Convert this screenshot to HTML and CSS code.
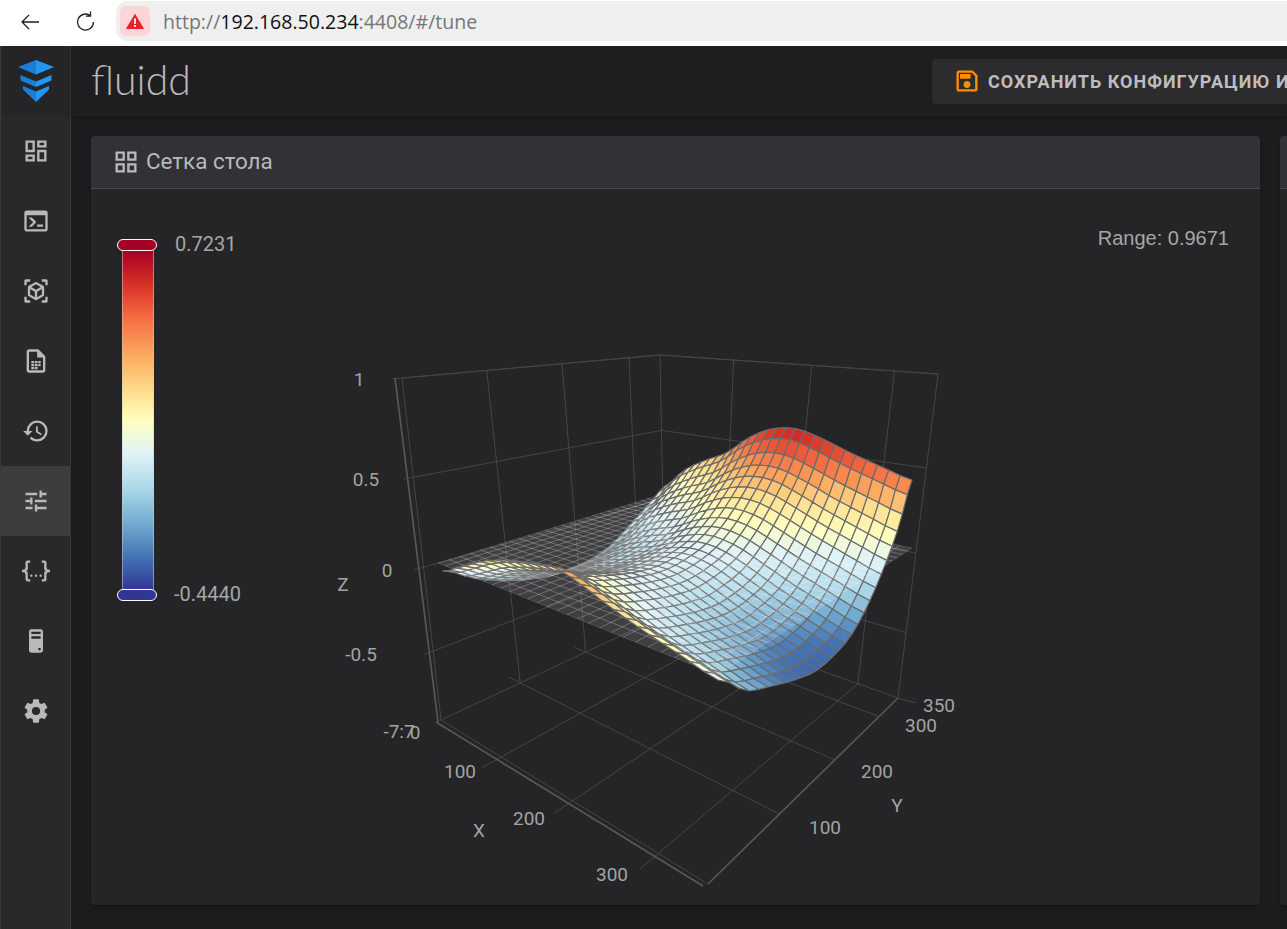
FILE: index.html
```html
<!DOCTYPE html>
<html lang="ru">
<head>
<meta charset="utf-8">
<title>fluidd</title>
<link rel="stylesheet" href="styles.css">
</head>
<body>
<div class="browser-bar">
  <svg class="nav-icon" viewBox="0 0 24 24"><path d="M21 12H4M11 5l-7 7 7 7"/></svg>
  <svg class="nav-icon reload" viewBox="0 0 24 24"><path d="M19.5 12a8 8 0 1 1-3-6.2M16.5 1.5v4.6h-4.6"/></svg>
  <div class="address">
    <span class="warn"><svg viewBox="0 0 24 24"><path d="M12 3.2 23 21.5H1z"/><rect class="warn-mark" x="10.9" y="9" width="2.2" height="6.5"/><rect class="warn-mark" x="10.9" y="16.8" width="2.2" height="2.2"/></svg></span>
    <span class="url">http://<b>192.168.50.234</b>:4408/#/tune</span>
  </div>
</div>
<div class="app">
  <aside class="sidebar">
    <div class="logo">
      <svg viewBox="0 0 36 42"><path class="lg-d" d="M18 0 0 7l18 7.6z"/><path class="lg-l" d="M18 0l18 7-18 7.6z"/><path class="lg-d" d="M2.5 15 18 21.6V27L2.5 20.4z"/><path class="lg-l" d="M33.5 15 18 21.6V27l15.5-6.6z"/><path class="lg-d" d="M5 26l13 5.5V42L5 29.5z"/><path class="lg-l" d="M31 26l-13 5.5V42l13-12.5z"/></svg>
    </div>
    <a class="nav-item"><svg viewBox="0 0 24 24"><path d="M19,5V7H15V5H19M9,5V11H5V5H9M19,13V19H15V13H19M9,17V19H5V17H9M21,3H13V9H21V3M11,3H3V13H11V3M21,11H13V21H21V11M11,15H3V21H11V15Z"/></svg></a>
    <a class="nav-item"><svg viewBox="0 0 24 24"><path d="M20,19V7H4V19H20M20,3A2,2 0 0,1 22,5V19A2,2 0 0,1 20,21H4A2,2 0 0,1 2,19V5A2,2 0 0,1 4,3H20M13,17V15H18V17H13M9.58,13L5.57,9H8.4L11.7,12.3C12.09,12.69 12.09,13.33 11.7,13.72L8.42,17H5.59L9.58,13Z"/></svg></a>
    <a class="nav-item"><svg viewBox="0 0 24 24"><path d="M17,22V20H20V17H22V20.5C22,20.89 21.84,21.24 21.54,21.54C21.24,21.84 20.89,22 20.5,22H17M7,22H3.5C3.11,22 2.76,21.84 2.46,21.54C2.16,21.24 2,20.89 2,20.5V17H4V20H7V22M17,2H20.5C20.89,2 21.24,2.16 21.54,2.46C21.84,2.76 22,3.11 22,3.5V7H20V4H17V2M7,2V4H4V7H2V3.5C2,3.11 2.16,2.76 2.46,2.46C2.76,2.16 3.11,2 3.5,2H7M13,17.25L17,14.95V10.36L13,12.65V17.25M12,10.92L16,8.63L12,6.28L8,8.63L12,10.92M7,14.95L11,17.25V12.65L7,10.36V14.95M18.23,7.59C18.73,7.91 19,8.34 19,8.91V15.23C19,15.8 18.73,16.23 18.23,16.55L12.75,19.73C12.25,20.05 11.75,20.05 11.25,19.73L5.77,16.55C5.27,16.23 5,15.8 5,15.23V8.91C5,8.34 5.27,7.91 5.77,7.59L11.25,4.41C11.5,4.28 11.75,4.22 12,4.22C12.25,4.22 12.5,4.28 12.75,4.41L18.23,7.59Z"/></svg></a>
    <a class="nav-item"><svg viewBox="0 0 24 24"><path d="M14 2H6C4.89 2 4 2.9 4 4V20C4 21.11 4.89 22 6 22H18C19.11 22 20 21.11 20 20V8L14 2M18 20H6V4H13V9H18V20Z"/><path d="M8 12h2.4v2H8zM11 12h2.4v2H11zM14 12h2v2h-2zM8 14.6h2.4v2H8zM11 14.6h2.4v2H11zM14 14.6h2v2h-2zM8 17.2h2.4v1.8H8zM11 17.2h2.4v1.8H11z"/></svg></a>
    <a class="nav-item"><svg viewBox="0 0 24 24"><path d="M13.5,8H12V13L16.28,15.54L17,14.33L13.5,12.25V8M13,3A9,9 0 0,0 4,12H1L4.96,16.03L9,12H6A7,7 0 0,1 13,5A7,7 0 0,1 20,12A7,7 0 0,1 13,19C11.07,19 9.32,18.21 8.06,16.94L6.64,18.36C8.27,20 10.5,21 13,21A9,9 0 0,0 22,12A9,9 0 0,0 13,3"/></svg></a>
    <a class="nav-item active"><svg viewBox="0 0 24 24"><path d="M3,17V19H9V17H3M3,5V7H13V5H3M13,21V19H21V17H13V15H11V21H13M7,9V11H3V13H7V15H9V9H7M21,13V11H11V13H21M15,9H17V7H21V5H17V3H15V9Z"/></svg></a>
    <a class="nav-item"><svg viewBox="0 0 24 24"><path d="M5,3H7V5H5V10A2,2 0 0,1 3,12A2,2 0 0,1 5,14V19H7V21H5C3.93,20.73 3,20.1 3,19V15A2,2 0 0,0 1,13H0V11H1A2,2 0 0,0 3,9V5A2,2 0 0,1 5,3M19,3A2,2 0 0,1 21,5V9A2,2 0 0,0 23,11H24V13H23A2,2 0 0,0 21,15V19A2,2 0 0,1 19,21H17V19H19V14A2,2 0 0,1 21,12A2,2 0 0,1 19,10V5H17V3H19M12,15A1,1 0 0,1 13,16A1,1 0 0,1 12,17A1,1 0 0,1 11,16A1,1 0 0,1 12,15M8,15A1,1 0 0,1 9,16A1,1 0 0,1 8,17A1,1 0 0,1 7,16A1,1 0 0,1 8,15M16,15A1,1 0 0,1 17,16A1,1 0 0,1 16,17A1,1 0 0,1 15,16A1,1 0 0,1 16,15Z"/></svg></a>
    <a class="nav-item"><svg viewBox="0 0 24 24"><path d="M8,2H16A2,2 0 0,1 18,4V20A2,2 0 0,1 16,22H8A2,2 0 0,1 6,20V4A2,2 0 0,1 8,2M8,4V6H16V4H8M16,8H8V10H16V8M16,18H14V20H16V18Z" fill-rule="evenodd"/></svg></a>
    <a class="nav-item"><svg viewBox="0 0 24 24"><path d="M12,15.5A3.5,3.5 0 0,1 8.5,12A3.5,3.5 0 0,1 12,8.5A3.5,3.5 0 0,1 15.5,12A3.5,3.5 0 0,1 12,15.5M19.43,12.97C19.47,12.65 19.5,12.33 19.5,12C19.5,11.67 19.47,11.34 19.43,11L21.54,9.37C21.73,9.22 21.78,8.95 21.66,8.73L19.66,5.27C19.54,5.05 19.27,4.96 19.05,5.05L16.56,6.05C16.04,5.66 15.5,5.32 14.87,5.07L14.5,2.42C14.46,2.18 14.25,2 14,2H10C9.75,2 9.54,2.18 9.5,2.42L9.13,5.07C8.5,5.32 7.96,5.66 7.44,6.05L4.95,5.05C4.73,4.96 4.46,5.05 4.34,5.27L2.34,8.73C2.21,8.95 2.27,9.22 2.46,9.37L4.57,11C4.53,11.34 4.5,11.67 4.5,12C4.5,12.33 4.53,12.65 4.57,12.97L2.46,14.63C2.27,14.78 2.21,15.05 2.34,15.27L4.34,18.73C4.46,18.95 4.73,19.03 4.95,18.95L7.44,17.94C7.96,18.34 8.5,18.68 9.13,18.93L9.5,21.58C9.54,21.82 9.75,22 10,22H14C14.25,22 14.46,21.82 14.5,21.58L14.87,18.93C15.5,18.67 16.04,18.34 16.56,17.94L19.05,18.95C19.27,19.03 19.54,18.95 19.66,18.73L21.66,15.27C21.78,15.05 21.73,14.78 21.54,14.63L19.43,12.97Z"/></svg></a>
  </aside>
  <div class="main">
    <header class="topbar">
      <span class="wordmark">fluidd</span>
      <button class="save-btn">
        <svg viewBox="0 0 24 24"><path d="M17 3H5C3.89 3 3 3.9 3 5V19C3 20.1 3.89 21 5 21H19C20.1 21 21 20.1 21 19V7L17 3M19 19H5V5H16.17L19 7.83V19M12 12C10.34 12 9 13.34 9 15S10.34 18 12 18 15 16.66 15 15 13.66 12 12 12M6 6H15V10H6V6Z"/></svg>
        <span>СОХРАНИТЬ КОНФИГУРАЦИЮ И ПЕРЕЗАПУСТИТЬ</span>
      </button>
    </header>
    <div class="content">
      <section class="card mesh-card">
        <div class="card-head">
          <svg viewBox="0 0 24 24"><path d="M3,11H11V3H3M5,5H9V9H5M13,21H21V13H13M15,15H19V19H15M3,21H11V13H3M5,15H9V19H5M13,3V11H21V3M19,9H15V5H19Z"/></svg>
          <span class="card-title">Сетка стола</span>
        </div>
        <div class="card-body">
          <div class="scale">
            <div class="scale-bar">
              <i class="handle handle-top"></i>
              <i class="handle handle-bottom"></i>
            </div>
            <div class="scale-labels"><span class="val-top">0.7231</span><span class="val-bottom">-0.4440</span></div>
          </div>
          <div class="range">Range: 0.9671</div>
          <svg id="plot" class="plot" viewBox="91 189 1169 716">
            <g id="axes"></g>
            <g id="surface"></g>
            <g class="ticks">
              <text x="359" y="386">1</text>
              <text x="366" y="486">0.5</text>
              <text x="387" y="577">0</text>
              <text x="361" y="661">-0.5</text>
              <text x="399" y="738">-7:7</text>
              <text x="415" y="739">0</text>
              <text x="343" y="591">Z</text>
              <text x="460" y="778">100</text>
              <text x="529" y="825">200</text>
              <text x="612" y="881">300</text>
              <text x="479" y="837">X</text>
              <text x="897" y="812">Y</text>
              <text x="825" y="834">100</text>
              <text x="877" y="778">200</text>
              <text x="921" y="732">300</text>
              <text x="939" y="712">350</text>
            </g>
          </svg>
        </div>
      </section>
      <section class="card side-card">
        <div class="card-head"></div>
        <div class="card-body"><div class="side-row"></div></div>
      </section>
    </div>
  </div>
</div>
<script src="plot.js"></script>
</body>
</html>
```
FILE: styles.css
```css
* { box-sizing: border-box; }
html, body { margin: 0; height: 100%; overflow: hidden; background: #1c1c1e; }
body { font-family: Roboto, "Liberation Sans", sans-serif; }

.browser-bar { height: 46px; background: #fff; display: flex; align-items: flex-start; padding: 1px 0 0 1px; }
.nav-icon { width: 24px; height: 24px; margin: 9px 0 0 17px; fill: none; stroke: #222; stroke-width: 1.3; }
.nav-icon.reload { margin-left: 32px; }
.address { margin: 0 0 0 18px; flex: 1; height: 40px; background: #efefef; border-radius: 12px 0 0 12px; display: flex; align-items: center; padding-left: 4px; }
.warn { width: 30px; height: 30px; border-radius: 6px; background: #fbd5d7; display: flex; align-items: center; justify-content: center; }
.warn svg { width: 20px; height: 20px; fill: #e8202c; }
.warn .warn-mark { fill: #fff; }
.url { margin-left: 13px; font: 19.55px "Open Sans", sans-serif; color: #767676; }
.url b { font-weight: 400; color: #111; }

.app { display: flex; height: 883px; }
.sidebar { width: 71px; flex: none; background: #29292b; border-right: 1px solid #38383a; border-left: 1px solid #3a3a3c; display: flex; flex-direction: column; }
.logo { height: 70px; background: #252527; display: flex; align-items: center; justify-content: center; }
.logo svg { width: 36px; height: 42px; margin-left: 1px; }
.lg-d { fill: #1a7fd4; }
.lg-l { fill: #2196f3; }
.nav-item { height: 70px; display: flex; align-items: center; justify-content: center; }
.nav-item svg { width: 28px; height: 28px; fill: #b9b9b9; }
.nav-item.active { background: #3d3d3f; }

.main { flex: 1; min-width: 0; display: flex; flex-direction: column; }
.topbar { height: 70px; flex: none; background: #1e1e20; display: flex; align-items: center; padding-left: 20px; box-shadow: 0 2px 4px rgba(0,0,0,.2); overflow: hidden; }
.wordmark { font: 300 41px Lato, sans-serif; color: #b8b8b8; width: 841px; flex: none; line-height: 1; margin-top: -3px; }
.save-btn { flex: none; width: 460px; height: 45px; background: #2c2c2e; border: 0; border-radius: 4px; display: flex; align-items: center; padding: 0 0 0 21px; gap: 7px; font: 700 18px Roboto, sans-serif; letter-spacing: 1px; color: #bdbdbd; white-space: nowrap; }
.save-btn svg { width: 28px; height: 28px; fill: #ff8f00; flex: none; }

.content { flex: 1; display: flex; gap: 20px; padding: 20px 0 24px 20px; min-height: 0; overflow: hidden; }
.card { background: #252527; border-radius: 4px; box-shadow: 0 2px 3px rgba(0,0,0,.25); display: flex; flex-direction: column; flex: none; overflow: hidden; }
.mesh-card { width: 1169px; }
.side-card { width: 600px; }
.card-head { height: 53px; flex: none; background: #313136; border-bottom: 1px solid #4c4c4e; display: flex; align-items: center; padding-left: 21px; color: #b9b9b9; font-size: 22.4px; gap: 6px; }
.card-head svg { width: 28px; height: 28px; fill: #b9b9b9; }
.card-title { margin-top: -2px; }
.card-body { flex: 1; position: relative; padding: 45px 31px 0 26px; display: flex; justify-content: space-between; align-items: flex-start; }
.scale { display: flex; gap: 22px; }
.scale-bar { width: 32px; height: 340px; margin-top: 16px; position: relative; border-left: 1px solid #ccc8; border-right: 1px solid #ccc8; background: linear-gradient(to bottom, #a50026 0%, #d73027 10%, #f46d43 20%, #fdae61 32%, #fee090 42%, #ffffbf 50%, #e0f3f8 60%, #abd9e9 70%, #74add1 80%, #4575b4 90%, #313695 100%); margin-left: 5px; }
.handle { position: absolute; left: -6px; width: 40px; height: 12px; border: 1px solid #fff; border-radius: 6px; }
.handle-top { top: -11px; background: #a50026; }
.handle-bottom { bottom: -11px; background: #313695; }
.scale-labels { display: flex; flex-direction: column; justify-content: space-between; height: 370px; font-size: 20px; color: #a6a6a6; line-height: 20px; margin-left: -1px; }
.val-bottom { margin-left: -1px; }
.range { font: 20px "Liberation Sans", sans-serif; color: #a6a6a6; line-height: 20px; margin-top: -6px; }
.plot { position: absolute; left: 0; top: 0; width: 1169px; height: 716px; }
.ticks text { font: 19px Roboto, sans-serif; fill: #a3a3a3; text-anchor: middle; }
.side-row { height: 59px; width: 100%; border-bottom: 1px solid #3a3a3c; }
.grid-line { stroke: #454546; stroke-width: 1; fill: none; }
.axis-line { stroke: #585859; stroke-width: 1.6; fill: none; }
.plane-cell { fill: rgba(255,255,255,.12); stroke: rgba(255,255,255,.17); stroke-width: .8; }
.mesh-cell { stroke: #6c6c6c; stroke-width: 1.2; stroke-linejoin: round; }
```
FILE: plot.js
```js
(function () {
  var NS = 'http://www.w3.org/2000/svg';
  var axes = document.getElementById('axes');
  var surf = document.getElementById('surface');

  // Unit square to quad, corners in order (0,0) (1,0) (1,1) (0,1)
  function quad(a, b, c, d) {
    var dx1 = b[0] - c[0], dx2 = d[0] - c[0], sx = a[0] - b[0] + c[0] - d[0];
    var dy1 = b[1] - c[1], dy2 = d[1] - c[1], sy = a[1] - b[1] + c[1] - d[1];
    var den = dx1 * dy2 - dx2 * dy1;
    var g = (sx * dy2 - dx2 * sy) / den, h = (dx1 * sy - sx * dy1) / den;
    return function (u, v) {
      var w = g * u + h * v + 1;
      return [((b[0] - a[0] + g * b[0]) * u + (d[0] - a[0] + h * d[0]) * v + a[0]) / w,
              ((b[1] - a[1] + g * b[1]) * u + (d[1] - a[1] + h * d[1]) * v + a[1]) / w];
    };
  }

  var floor = quad([441, 720], [708, 884], [898, 698], [665, 615]);
  var top = quad([402, 378], [715, 405], [938, 374], [660, 355]);
  var plane = quad([438, 563], [718, 675], [912, 548], [660, 495]);

  // position between the top (t=0) and the floor (t=1) of the box
  function box(u, v, t) {
    var a = top(u, v), b = floor(u, v);
    return [a[0] + (b[0] - a[0]) * t, a[1] + (b[1] - a[1]) * t];
  }
  var Z = { '1': 0, '.5': 0.29, '0': 0.553, '-.5': 0.798 };

  function add(parent, tag, attrs) {
    var el = document.createElementNS(NS, tag);
    for (var k in attrs) el.setAttribute(k, attrs[k]);
    parent.appendChild(el);
    return el;
  }
  function line(a, b, cls) {
    add(axes, 'line', { x1: a[0], y1: a[1], x2: b[0], y2: b[1], 'class': cls || 'grid-line' });
  }

  var ticks = [100 / 350, 200 / 350, 300 / 350];
  ticks.forEach(function (k) {
    // floor grid
    line(box(k, -0.06, 1), box(k, 1, 1));
    line(box(-0.06, k, 1), box(1, k, 1));
    // back walls
    line(box(0, k, 0), box(0, k, 1));
    line(box(k, 1, 0), box(k, 1, 1));
  });
  Object.keys(Z).forEach(function (k) {
    var t = Z[k];
    line(box(0, -0.03, t), box(0, 1, t));
    line(box(0, 1, t), box(1, 1, t));
  });
  line(box(0, 0, 0), box(0, 0, 1));
  line(box(0, 1, 0), box(0, 1, 1));
  line(box(1, 1, 0), box(1, 1, 1));
  line(box(0, 0, 0), box(0, 1, 0));
  line(box(0, 1, 0), box(1, 1, 0));
  line(box(0, 1, 1), box(1, 1, 1));
  line(box(0, 0, 1), box(0, 1, 1));
  // heavier axis lines, offset just outside the box
  line([395, 378], [438, 722], 'axis-line');
  line([436, 722], [703, 886], 'axis-line');
  line(floor(1, 0), floor(1, 1), 'axis-line');
  line(box(0, 0, 1), box(1, 0, 1));
  line(floor(1, 1), [916, 703]);

  // Height of the surface above the plane, in screen pixels, along its four edges
  var E0 = [-6, 6, 20, 30, 37, 42, 35, 24, 14, 5, -5];
  var E1 = [10, 30, 44, 56, 76, 90, 95, 90, 82, 75, 68];
  var G0 = [-6, -22, -33, -40, -43, -43, -40, -32, -18, -4, 10];
  var G1 = [-5, -34, -46, -55, -60, -56, -46, -26, 0, 30, 68];
  function spline(p, s) {
    var f = s * (p.length - 1), i = Math.min(Math.floor(f), p.length - 2), t = f - i;
    var a = p[Math.max(i - 1, 0)], b = p[i], c = p[i + 1], d = p[Math.min(i + 2, p.length - 1)];
    return 0.5 * (2 * b + (c - a) * t + (2 * a - 5 * b + 4 * c - d) * t * t + (3 * b - a - 3 * c + d) * t * t * t);
  }
  function height(u, v) {
    return (1 - v) * spline(E0, u) + v * spline(E1, u) + (1 - u) * spline(G0, v) + u * spline(G1, v) -
      ((1 - u) * (1 - v) * E0[0] + u * (1 - v) * E0[10] + (1 - u) * v * E1[0] + u * v * E1[10]);
  }

  var stops = [
    [-62, [60, 100, 175]], [-50, [69, 117, 180]], [-35, [116, 173, 209]], [-18, [171, 217, 233]],
    [3, [224, 243, 248]], [22, [255, 255, 191]], [40, [254, 224, 144]], [55, [253, 174, 97]],
    [72, [244, 109, 67]], [90, [215, 48, 39]], [110, [165, 0, 38]]
  ];
  function colour(h) {
    if (h <= stops[0][0]) h = stops[0][0];
    if (h >= stops[stops.length - 1][0]) h = stops[stops.length - 1][0];
    for (var i = 0; i < stops.length - 1; i++) {
      if (h <= stops[i + 1][0]) {
        var t = (h - stops[i][0]) / (stops[i + 1][0] - stops[i][0]), a = stops[i][1], b = stops[i + 1][1];
        return 'rgb(' + [0, 1, 2].map(function (c) { return Math.round(a[c] + (b[c] - a[c]) * t); }).join(',') + ')';
      }
    }
  }
  function pts(list) {
    return list.map(function (p) { return p[0].toFixed(1) + ',' + p[1].toFixed(1); }).join(' ');
  }

  var N = 27;
  // The surface starts a little inside the plane's far-left corner
  function sp(u, v) {
    var p = plane(0.025 + 0.975 * u, v);
    return [p[0], p[1] - height(u, v)];
  }
  function drawPlane(u0, u1, v0, v1) {
    add(surf, 'polygon', { 'class': 'plane-cell', points: pts([plane(u0, v0), plane(u1, v0), plane(u1, v1), plane(u0, v1)]) });
  }
  // Back corner first, front corner last
  for (var i = 0; i < N; i++) {
    for (var j = N - 1; j >= 0; j--) {
      var u0 = i / N, u1 = (i + 1) / N, v0 = j / N, v1 = (j + 1) / N;
      var vm = (v0 + v1) / 2;
      var h = height((u0 + u1) / 2, vm);
      if (h > 0) drawPlane(u0, u1, v0, v1);
      // the ridge along the near-left edge reads yellower than its height alone
      add(surf, 'polygon', { 'class': 'mesh-cell', fill: colour(h + 22 * Math.pow(1 - vm, 10)), points: pts([sp(u0, v0), sp(u1, v0), sp(u1, v1), sp(u0, v1)]) });
      if (h <= 0) drawPlane(u0, u1, v0, v1);
    }
  }
})();
```
